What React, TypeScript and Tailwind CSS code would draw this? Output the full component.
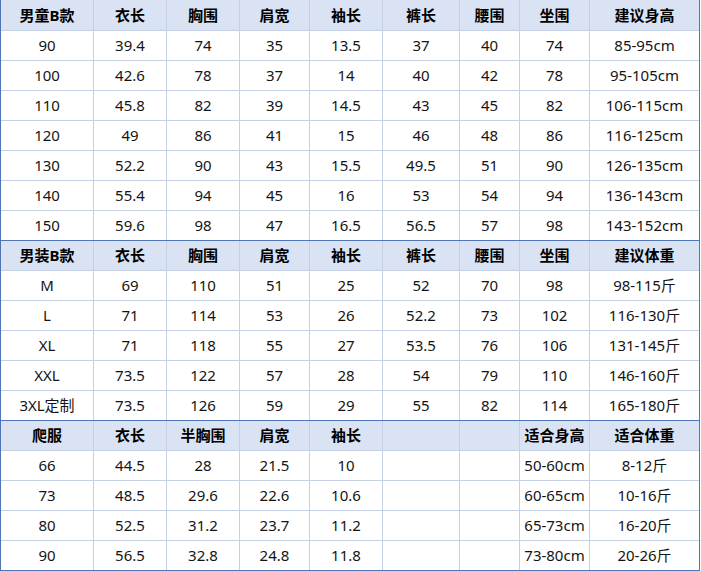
const WIDTHS = ["w-[93px]", "w-[73px]", "w-[73px]", "w-[70px]", "w-[73px]", "w-[77px]", "w-[60px]", "w-[70px]", "w-[109px]"];

type Section = { head: string[]; rows: string[][] };

const SECTIONS: Section[] = [
  {
    head: ["男童B款", "衣长", "胸围", "肩宽", "袖长", "裤长", "腰围", "坐围", "建议身高"],
    rows: [
      ["90", "39.4", "74", "35", "13.5", "37", "40", "74", "85-95cm"],
      ["100", "42.6", "78", "37", "14", "40", "42", "78", "95-105cm"],
      ["110", "45.8", "82", "39", "14.5", "43", "45", "82", "106-115cm"],
      ["120", "49", "86", "41", "15", "46", "48", "86", "116-125cm"],
      ["130", "52.2", "90", "43", "15.5", "49.5", "51", "90", "126-135cm"],
      ["140", "55.4", "94", "45", "16", "53", "54", "94", "136-143cm"],
      ["150", "59.6", "98", "47", "16.5", "56.5", "57", "98", "143-152cm"],
    ],
  },
  {
    head: ["男装B款", "衣长", "胸围", "肩宽", "袖长", "裤长", "腰围", "坐围", "建议体重"],
    rows: [
      ["M", "69", "110", "51", "25", "52", "70", "98", "98-115斤"],
      ["L", "71", "114", "53", "26", "52.2", "73", "102", "116-130斤"],
      ["XL", "71", "118", "55", "27", "53.5", "76", "106", "131-145斤"],
      ["XXL", "73.5", "122", "57", "28", "54", "79", "110", "146-160斤"],
      ["3XL定制", "73.5", "126", "59", "29", "55", "82", "114", "165-180斤"],
    ],
  },
  {
    head: ["爬服", "衣长", "半胸围", "肩宽", "袖长", "", "", "适合身高", "适合体重"],
    rows: [
      ["66", "44.5", "28", "21.5", "10", "", "", "50-60cm", "8-12斤"],
      ["73", "48.5", "29.6", "22.6", "10.6", "", "", "60-65cm", "10-16斤"],
      ["80", "52.5", "31.2", "23.7", "11.2", "", "", "65-73cm", "16-20斤"],
      ["90", "56.5", "32.8", "24.8", "11.8", "", "", "73-80cm", "20-26斤"],
    ],
  },
];

function Row({ cells, head, last, top }: { cells: string[]; head?: boolean; last?: boolean; top?: boolean }) {
  return (
    <div
      className={`flex ${top ? "h-[31px]" : "h-[30px]"} border-b ${last ? "border-[#4f74b8]" : "border-[#c5d0e4]"} ${
        head ? "bg-[#dae3f3] font-bold text-black" : "bg-white text-[#141414]"
      }`}
    >
      {cells.map((c, i) => (
        <div
          key={i}
          className={`${WIDTHS[i]} flex shrink-0 items-center justify-center whitespace-nowrap ${
            i < cells.length - 1 ? "border-r border-[#c5d0e4]" : ""
          }`}
        >
          {c}
        </div>
      ))}
    </div>
  );
}

export default function App() {
  return (
    <div
      className="w-[700px] border-l border-r border-[#4f74b8] bg-white text-[15px] leading-none"
      style={{ fontFamily: '"Noto Sans", "Noto Sans CJK SC", sans-serif' }}
    >
      {SECTIONS.map((s, si) => (
        <div key={si} className={si > 0 ? "border-t border-[#4f74b8] -mt-px" : ""}>
          <Row cells={s.head} head top={si === 0} />
          {s.rows.map((r, ri) => (
            <Row key={ri} cells={r} last={si === SECTIONS.length - 1 && ri === s.rows.length - 1} />
          ))}
        </div>
      ))}
    </div>
  );
}
